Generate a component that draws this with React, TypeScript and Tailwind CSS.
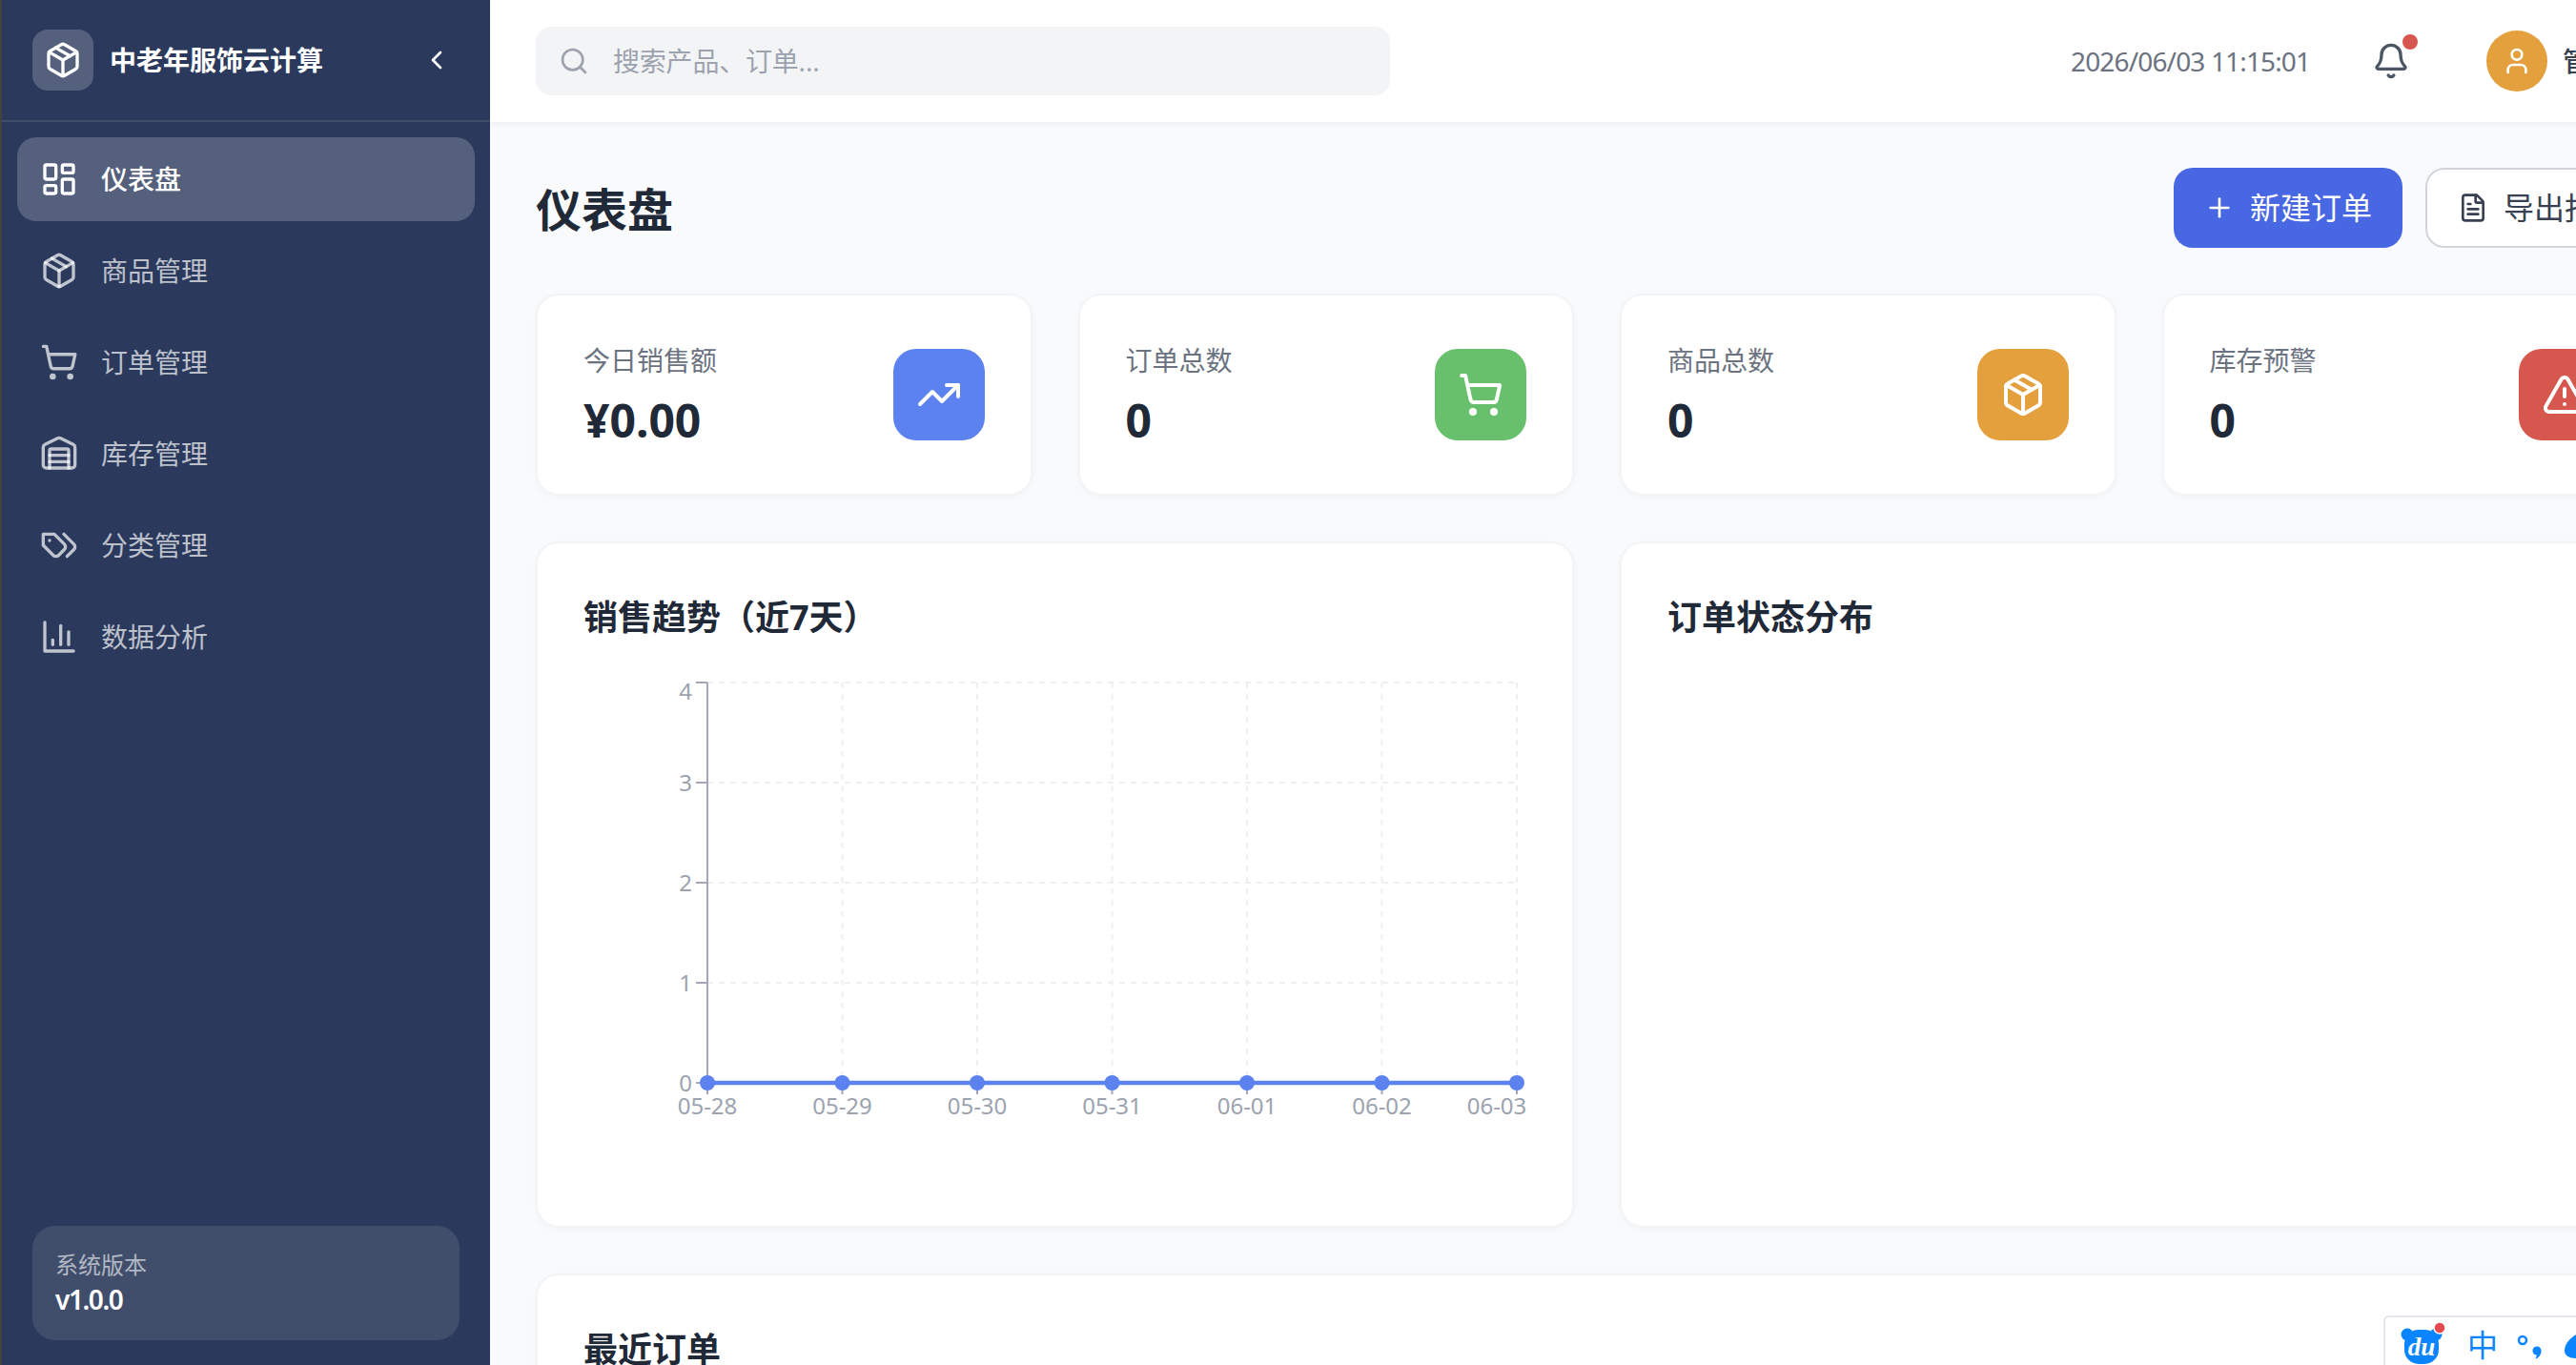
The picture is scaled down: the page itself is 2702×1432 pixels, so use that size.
import {
  AlertTriangle,
  Bell,
  ChevronLeft,
  FileText,
  LayoutDashboard,
  Package,
  Plus,
  Search,
  ShoppingCart,
  TrendingUp,
  User,
  Warehouse,
} from 'lucide-react'

// older lucide shapes, the current package draws these two differently
function TagsIcon({ size = 40 }: { size?: number }) {
  return (
    <svg width={size} height={size} viewBox="0 0 24 24" fill="none" stroke="currentColor" strokeWidth="2" strokeLinecap="round" strokeLinejoin="round">
      <path d="M9 5H2v7l6.29 6.29c.94.94 2.48.94 3.42 0l3.58-3.58c.94-.94.94-2.48 0-3.42L9 5Z" />
      <path d="M6 9.01V9" />
      <path d="m15 5 6.3 6.3a2.4 2.4 0 0 1 0 3.4L17 19" />
    </svg>
  )
}

function BarsIcon({ size = 40 }: { size?: number }) {
  return (
    <svg width={size} height={size} viewBox="0 0 24 24" fill="none" stroke="currentColor" strokeWidth="2" strokeLinecap="round" strokeLinejoin="round">
      <path d="M3 3v18h18" />
      <path d="M18 17V9" />
      <path d="M13 17V5" />
      <path d="M8 17v-3" />
    </svg>
  )
}

const navItems = [
  { label: '仪表盘', icon: LayoutDashboard, active: true },
  { label: '商品管理', icon: Package },
  { label: '订单管理', icon: ShoppingCart },
  { label: '库存管理', icon: Warehouse },
  { label: '分类管理', icon: TagsIcon },
  { label: '数据分析', icon: BarsIcon },
]

const stats = [
  { label: '今日销售额', value: '¥0.00', icon: TrendingUp, color: 'bg-[#5b82ee]' },
  { label: '订单总数', value: '0', icon: ShoppingCart, color: 'bg-[#68c06c]' },
  { label: '商品总数', value: '0', icon: Package, color: 'bg-[#e3a03c]' },
  { label: '库存预警', value: '0', icon: AlertTriangle, color: 'bg-[#d5574e]' },
]

const xLabels = ['05-28', '05-29', '05-30', '05-31', '06-01', '06-02', '06-03']

function SalesChart() {
  // svg origin sits at (612, 706) on the page
  const left = 130
  const top = 10
  const stepX = 141.5
  const stepY = 105
  const xs = xLabels.map((_, i) => left + i * stepX)
  const ys = [0, 1, 2, 3, 4].map((i) => top + i * stepY)
  const bottom = ys[4]
  const right = xs[6]

  return (
    <svg width="989" height="532" className="block">
      <g stroke="#eeeff2" strokeWidth="2" strokeDasharray="6 6">
        {ys.map((y) => (
          <line key={y} x1={left} x2={right} y1={y} y2={y} />
        ))}
        {xs.map((x) => (
          <line key={x} x1={x} x2={x} y1={top} y2={bottom} />
        ))}
      </g>
      <g stroke="#a3a7b9" strokeWidth="2">
        <line x1={left} x2={left} y1={top} y2={bottom} />
        {ys.map((y) => (
          <line key={y} x1={left - 12} x2={left} y1={y} y2={y} />
        ))}
        {xs.map((x) => (
          <line key={x} x1={x} x2={x} y1={bottom} y2={bottom + 12} />
        ))}
      </g>
      <g fill="#9ca3af" fontSize="24" textAnchor="end">
        {['4', '3', '2', '1', '0'].map((t, i) => (
          <text key={t} x={left - 16} y={i === 0 ? top + 18 : ys[i] + 9}>
            {t}
          </text>
        ))}
      </g>
      <g fill="#9ca3af" fontSize="24" textAnchor="middle">
        {xLabels.map((t, i) => (
          <text key={t} x={i === 6 ? xs[i] - 21 : xs[i]} y={bottom + 33}>
            {t}
          </text>
        ))}
      </g>
      <line x1={left} x2={right} y1={bottom} y2={bottom} stroke="#5b82ee" strokeWidth="4.5" />
      {xs.map((x) => (
        <circle key={x} cx={x} cy={bottom} r="8" fill="#5b82ee" />
      ))}
    </svg>
  )
}

export default function App() {
  return (
    <div className="relative flex h-screen w-full overflow-hidden bg-[#f9fafb] font-['Noto_Sans','Noto_Sans_CJK_SC',sans-serif]">
      <div className="w-[2px] shrink-0 bg-[#44443f]" />

      {/* Sidebar */}
      <aside className="flex w-[512px] shrink-0 flex-col bg-[#2b3a5c]">
        <div className="flex h-[128px] shrink-0 items-center justify-between border-b-2 border-white/10 px-[32px]">
          <div className="flex items-center gap-[17px]">
            <div className="flex h-[64px] w-[64px] items-center justify-center rounded-[16px] bg-white/20">
              <Package size={40} className="text-white" />
            </div>
            <span className="text-[28px] font-bold text-white">中老年服饰云计算</span>
          </div>
          <button className="p-[8px] text-white">
            <ChevronLeft size={32} />
          </button>
        </div>

        <nav className="flex flex-1 flex-col gap-[8px] px-[16px] py-[16px]">
          {navItems.map((item) => (
            <div
              key={item.label}
              className={`flex h-[88px] items-center gap-[24px] rounded-[20px] px-[24px] text-[28px] ${
                item.active ? 'bg-white/20 font-medium text-white' : 'text-white/70'
              }`}
            >
              <item.icon size={40} />
              <span>{item.label}</span>
            </div>
          ))}
        </nav>

        <div className="mx-[32px] mb-[26px] flex h-[120px] shrink-0 flex-col justify-center rounded-[24px] bg-white/10 px-[24px]">
          <span className="text-[24px] leading-[36px] text-white/60">系统版本</span>
          <span className="mb-[2px] text-[28px] font-semibold leading-[36px] tracking-[-1.4px] text-white">v1.0.0</span>
        </div>
      </aside>

      {/* Main */}
      <div className="flex w-[2322px] shrink-0 flex-col">
        <header className="flex h-[128px] shrink-0 items-center bg-white pl-[48px] pr-[30px] shadow-[0_2px_6px_rgba(0,0,0,0.05)]">
          <div className="flex h-[72px] w-[896px] items-center gap-[25px] rounded-[16px] bg-[#f3f4f6] pl-[24px]">
            <Search size={32} className="text-[#9ca3af]" />
            <span className="text-[28px] tracking-[-0.2px] text-[#9ca3af]">搜索产品、订单...</span>
          </div>
          <div className="ml-[714px] flex items-center">
            <span className="w-[300px] text-[28px] tracking-[-0.85px] text-[#6b7280]">2026/06/03 11:15:01</span>
            <button className="relative p-[16px] text-[#4b5563]">
              <Bell size={40} />
              <span className="absolute right-[8px] top-[8px] h-[16px] w-[16px] rounded-full bg-[#d5574e]" />
            </button>
            <div className="ml-[64px] flex items-center gap-[16px]">
              <div className="flex h-[64px] w-[64px] items-center justify-center rounded-full bg-[#e3a03c]">
                <User size={32} className="text-white" />
              </div>
              <span className="text-[28px] font-medium text-[#374151]">管理员</span>
            </div>
          </div>
        </header>

        <main className="flex flex-col gap-[48px] p-[48px]">
          <div className="flex items-center justify-between">
            <h1 className="pt-[4px] text-[48px] font-bold text-[#1f2937]">仪表盘</h1>
            <div className="flex gap-[24px]">
              <button className="flex h-[84px] items-center gap-[16px] rounded-[20px] bg-[#4867e2] px-[32px] text-[32px] text-white">
                <Plus size={32} />
                新建订单
              </button>
              <button className="flex h-[84px] items-center gap-[16px] rounded-[20px] border-2 border-[#d1d5db] bg-white px-[32px] text-[32px] text-[#374151]">
                <FileText size={32} />
                导出报表
              </button>
            </div>
          </div>

          <div className="grid grid-cols-4 gap-[48px]">
            {stats.map((s) => (
              <div
                key={s.label}
                className="flex h-[212px] items-center justify-between rounded-[24px] border-2 border-[#f3f4f6] bg-white px-[48px] shadow-[0_2px_6px_rgba(0,0,0,0.03)]"
              >
                <div className="pt-[3px]">
                  <p className="text-[28px] leading-[40px] text-[#6b7280]">{s.label}</p>
                  <p className="mt-[11px] text-[48px] font-bold leading-[64px] text-[#1f2937]">{s.value}</p>
                </div>
                <div className={`flex h-[96px] w-[96px] items-center justify-center rounded-[24px] text-white ${s.color}`}>
                  <s.icon size={48} />
                </div>
              </div>
            ))}
          </div>

          <div className="grid grid-cols-2 gap-[48px]">
            <div className="rounded-[24px] border-2 border-[#f3f4f6] bg-white p-[48px] shadow-[0_2px_6px_rgba(0,0,0,0.03)]">
              <h2 className="mb-[28px] text-[36px] font-bold leading-[60px] text-[#1f2937]">销售趋势（近7天）</h2>
              <SalesChart />
            </div>
            <div className="rounded-[24px] border-2 border-[#f3f4f6] bg-white p-[48px] shadow-[0_2px_6px_rgba(0,0,0,0.03)]">
              <h2 className="text-[36px] font-bold leading-[60px] text-[#1f2937]">订单状态分布</h2>
            </div>
          </div>

          <div className="h-[400px] rounded-[24px] border-2 border-[#f3f4f6] bg-white p-[48px] shadow-[0_2px_6px_rgba(0,0,0,0.03)]">
            <h2 className="text-[36px] font-bold leading-[60px] text-[#1f2937]">最近订单</h2>
          </div>
        </main>
      </div>

      {/* IME toolbar floating over the page */}
      <div className="absolute bottom-0 right-0 flex h-[52px] w-[202px] items-start overflow-hidden rounded-tl-[6px] border-l-2 border-t-2 border-[#e5e5ec] bg-white pl-[16px]">
        <svg width="46" height="40" viewBox="0 0 46 40" className="mt-[9px] shrink-0 overflow-visible">
          <circle cx="7" cy="9" r="6.5" fill="#0a84ff" />
          <circle cx="37" cy="9" r="6.5" fill="#0a84ff" />
          <rect x="4" y="4" width="36" height="36" rx="15" fill="#0a84ff" />
          <text x="22" y="31" fill="#fff" fontSize="27" fontStyle="italic" fontWeight="700" fontFamily="'Liberation Serif', serif" textAnchor="middle">du</text>
          <circle cx="41" cy="2" r="6" fill="#e5484d" stroke="#fff" strokeWidth="1.5" />
        </svg>
        <span className="ml-[24px] mt-[13px] text-[32px] leading-[32px] text-[#0a84ff]">中</span>
        <svg width="82" height="40" viewBox="0 0 82 40" className="mt-[9px] shrink-0">
          <circle cx="26" cy="15" r="4" fill="none" stroke="#0a84ff" strokeWidth="2.5" />
          <circle cx="41" cy="26" r="4.5" fill="#0a84ff" />
          <path d="M45.5 26c0 4-2 7-6 9l1.5-5z" fill="#0a84ff" />
          <path d="M82 9C74 14 70 20 70 26c0 5 5 8 12 8z" fill="#0a84ff" />
        </svg>
      </div>
    </div>
  )
}
